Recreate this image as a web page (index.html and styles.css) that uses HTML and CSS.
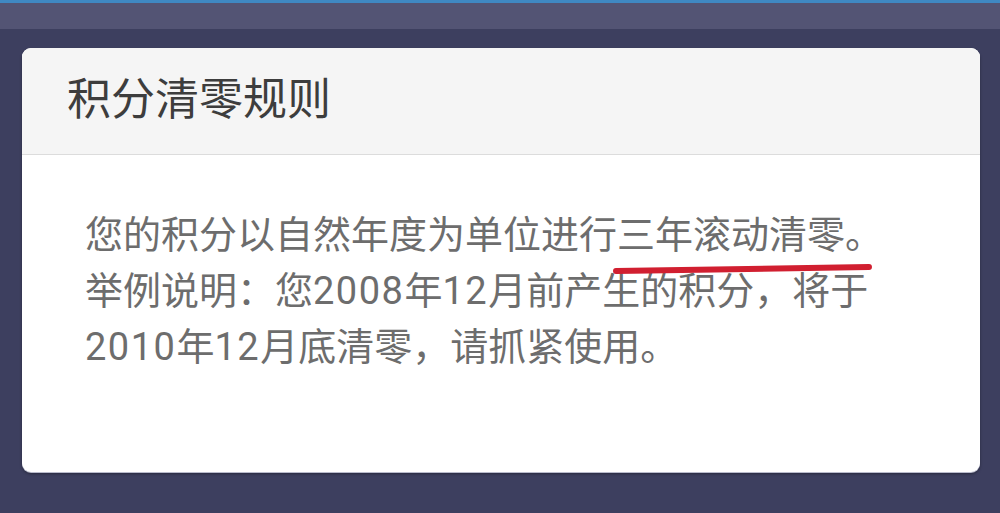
FILE: index.html
```html
<!DOCTYPE html>
<html lang="zh-CN">
<head>
<meta charset="utf-8">
<link rel="stylesheet" href="styles.css">
</head>
<body>
<div class="topbar"></div>
<main class="main">
  <section class="card">
    <header class="card-head">
      <h1 class="title">积分清零规则</h1>
    </header>
    <div class="card-body">
      <p class="text">您的积分以自然年度为单位进行<span class="mark">三年滚动清零。</span><br>举例说明：您<span class="num">2008</span>年<span class="num">12</span>月前产生的积分，将于<br><span class="num">2010</span>年<span class="num">12</span>月底清零，请抓紧使用。</p>
    </div>
  </section>
</main>
</body>
</html>
```
FILE: styles.css
```css
html, body {
  margin: 0;
  padding: 0;
  height: 100%;
}
body {
  background: #3d3f5f;
  font-family: Roboto, "Noto Sans CJK SC", "Noto Sans", sans-serif;
  overflow: hidden;
}
.topbar {
  height: 26px;
  border-top: 3px solid #3f88c2;
  background: #535474;
}
.main {
  padding: 19px 20px 0 22px;
}
.card {
  width: 958px;
  height: 424px;
  background: #ffffff;
  border-radius: 9px;
  overflow: hidden;
  box-shadow: 0 1px 0 #b9bbcc, 0 2px 3px rgba(0,0,0,0.35);
  display: flex;
  flex-direction: column;
}
.card-head {
  background: #f5f5f5;
  border-bottom: 1px solid #dcdcdc;
  display: flex;
  align-items: center;
  padding: 0 0 3px 45px;
  box-sizing: border-box;
  height: 107px;
}
.title {
  margin: 0;
  font-size: 44px;
  font-weight: 400;
  color: #3d3d3d;
  line-height: 1;
}
.card-body {
  padding: 52px 0 0 63px;
}
.text {
  margin: 0;
  font-size: 38px;
  line-height: 56px;
  color: #6d6d6d;
  white-space: nowrap;
}
.num {
  letter-spacing: 1.5px;
}
.mark {
  position: relative;
}
.mark::after {
  content: "";
  position: absolute;
  left: -4px;
  right: 11px;
  bottom: -15px;
  height: 6px;
  background: #d11f30;
  border-radius: 3px;
  transform: rotate(-0.9deg);
}
```
